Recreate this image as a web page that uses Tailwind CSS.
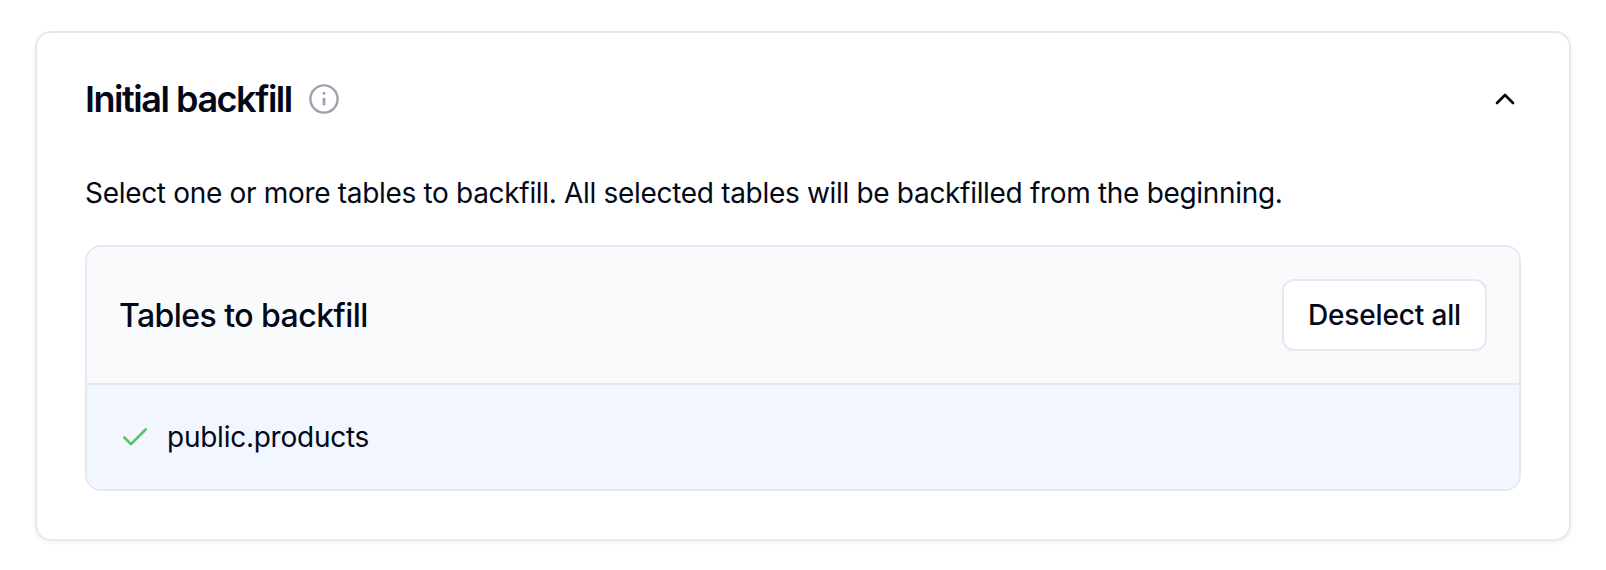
<!DOCTYPE html>
<html lang="en"><head><meta charset="utf-8"><title>Initial backfill</title>
<script src="https://cdn.jsdelivr.net/npm/@tailwindcss/browser@4"></script></head>
<body class="bg-white font-['Inter',sans-serif] text-[#020817]">
<main class="h-[570px] px-[35px] pt-[31px]">
<section class="h-[510px] rounded-2xl border-2 border-[#e3e8f2] px-12 pt-[46px] shadow-[0_2px_4px_rgba(0,0,0,0.05)]">
<header class="flex h-10 items-center">
<h1 class="w-[208px] whitespace-nowrap text-[36px] font-semibold leading-10 tracking-[-1.46px]">Initial backfill</h1>
<svg class="ml-[15px] size-8 text-[#9ca3af]" viewBox="0 0 32 32" fill="none" stroke="currentColor" stroke-width="2.4"><circle cx="16" cy="16" r="13.6"/><path d="M16 16.2v5" stroke-width="2.8" stroke-linecap="round"/><circle cx="16" cy="10.2" r="1.5" fill="currentColor" stroke="none"/></svg>
<svg class="ml-auto size-8" viewBox="0 0 24 24" fill="none" stroke="currentColor" stroke-width="2" stroke-linecap="round" stroke-linejoin="round"><path d="m18 15-6-6-6 6"/></svg>
</header>
<p class="mt-[54px] text-[28px] leading-10 tracking-[-0.315px]">Select one or more tables to backfill. All selected tables will be backfilled from the beginning.</p>
<div class="mt-[32px] h-[246px] overflow-hidden rounded-2xl border-2 border-[#e3e8f2]">
<div class="flex h-[138px] items-center justify-between border-b-2 border-slate-200 bg-[#f9fafc] px-8">
<h2 class="pt-px text-[32px] font-medium tracking-[-0.55px]">Tables to backfill</h2>
<button class="h-[72px] w-[205px] rounded-xl border-2 border-[#e3e8f2] bg-white text-[28px] font-medium tracking-[-0.15px]">Deselect all</button>
</div>
<div class="flex h-[106px] items-center bg-[#f1f6ff] px-8"><svg class="size-8" viewBox="0 0 24 24" fill="none" stroke="#57c568" stroke-width="2" stroke-linecap="round" stroke-linejoin="round"><path d="M20 5.6 9 16.6l-5-5"/></svg><span class="ml-4 pb-0.5 text-[28px] tracking-[-0.25px]">public.products</span></div>
</div>
</section></main></body></html>
